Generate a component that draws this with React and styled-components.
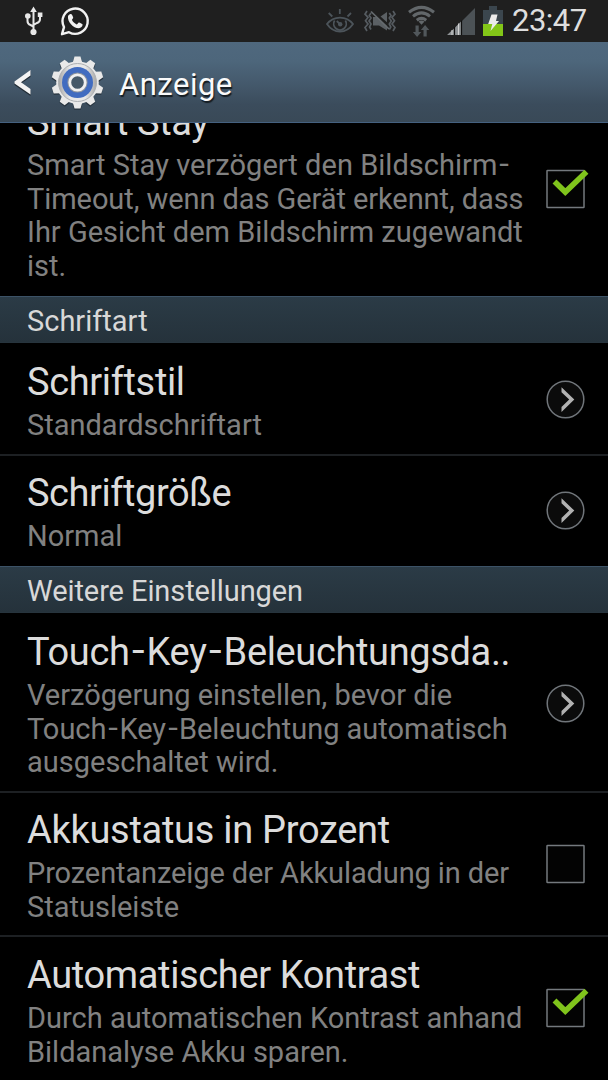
import React from "react";
import styled, { createGlobalStyle } from "styled-components";

const GlobalStyle = createGlobalStyle`
  * { box-sizing: border-box; }
  html, body { margin: 0; background: #000; overflow: hidden; }
`;

const Screen = styled.div`
  width: 608px;
  height: 1080px;
  display: flex;
  flex-direction: column;
  overflow: hidden;
  background: #000;
  color: #dcdcdc;
  font-family: Roboto, sans-serif;
  white-space: nowrap;
`;

const StatusBar = styled.header`
  flex: none;
  height: 42px;
  padding: 0 21px 0 22px;
  display: flex;
  justify-content: space-between;
  background: #1f1f1f;
`;

const StatusGroup = styled.div`
  display: flex;
  align-items: center;
`;

const Clock = styled.time`
  width: 75px;
  margin-left: 9px;
  font-size: 31px;
  line-height: 42px;
  letter-spacing: -0.5px;
  color: #dedede;
`;

const ActionBar = styled.div`
  flex: none;
  height: 81px;
  padding-left: 14px;
  display: flex;
  align-items: center;
  background: linear-gradient(#4f687e 0, #4d667b 24%, #455a6d 50%, #3b4c5c 78%, #394957 100%);
  border-bottom: 1px solid #456180;
`;

const BarTitle = styled.h1`
  margin: 5px 0 0 15px;
  font-size: 31px;
  font-weight: 400;
  line-height: 40px;
  letter-spacing: 0.5px;
  color: #fafafa;
  text-shadow: 1px 2px 1px #151c22;
`;

const List = styled.main`
  flex: 1;
  min-height: 0;
  display: flex;
  flex-direction: column;
  justify-content: flex-start;
  overflow: hidden;
`;

const SectionHeader = styled.h2`
  flex: none;
  height: 47px;
  margin: 0;
  padding: 1px 0 0 27px;
  border-top: 1px solid #3c5266;
  border-bottom: 1px solid #27343d;
  background: linear-gradient(#2b3b46, #25323b);
  color: #d8d8d8;
  font-size: 29px;
  font-weight: 400;
  line-height: 46px;
  letter-spacing: ${(p) => p.$tracking ?? 0}px;
`;

const Row = styled.section`
  flex: none;
  height: ${(p) => p.$height}px;
  margin-top: ${(p) => p.$scrolled ?? 0}px;
  padding: ${(p) => p.$inset ?? 16}px 22px 0 27px;
  display: flex;
  justify-content: space-between;
  border-bottom: ${(p) => (p.$divider ? "2px solid #1d2023" : "0")};
`;

const RowText = styled.div`
  min-width: 0;
`;

const RowTitle = styled.h3`
  margin: 0 0 4px;
  font-size: 38px;
  font-weight: 400;
  line-height: 45px;
  letter-spacing: ${(p) => p.$tracking ?? -0.36}px;
`;

const SummaryLine = styled.div`
  font-size: 29px;
  line-height: 33.7px;
  letter-spacing: ${(p) => p.$tracking ?? 0}px;
  color: #818181;
`;

const WideHyphen = styled.span`
  display: inline-block;
  margin: 0 0.08em 0 0.09em;
  letter-spacing: 0;
  transform: translateY(-0.04em) scaleX(1.2);
`;

const Control = styled.div`
  flex: none;
  height: 40px;
  margin-top: ${(p) => p.$top}px;
`;

const Graphic = styled.svg`
  display: block;
  flex: none;
  overflow: visible;
  margin-left: ${(p) => p.$gap ?? 0}px;
`;

function UsbIcon() {
  return (
    <Graphic width="22" height="30" viewBox="0 0 22 30" fill="none" stroke="#e8e8e8" strokeWidth="2">
      <path d="M11.5 5v19M5.5 10v5q0 3 3 4l3 1.5M18 9v4q0 3-3 4l-3.5 2" />
      <path d="M11.5 0.5l3.3 5.5H8.2z" fill="#e8e8e8" stroke="none" />
      <circle cx="5.8" cy="10" r="2.8" fill="#e8e8e8" stroke="none" />
      <path d="M15.8 6.5h4.6V11h-4.6z" fill="#e8e8e8" stroke="none" />
      <circle cx="11.5" cy="26" r="3.1" fill="#e8e8e8" stroke="none" />
    </Graphic>
  );
}

function WhatsAppIcon() {
  return (
    <Graphic $gap={15.5} width="29" height="30" viewBox="0 0 29 30">
      <path d="M2 28.2l2-7.1A12.6 12.6 0 1 1 9 26.2z" fill="none" stroke="#f2f2f2" strokeWidth="2.4" strokeLinejoin="round" />
      <path d="M8 10.2c.7-1.7 2.2-2.8 3.5-2 .8.6 1.4 2.6 1.7 3.4.2.8-1.4 1.8-1.2 2.5 1 2 2.5 3.4 4.7 4.3.8.2 1.5-2 2.3-1.8 1 .3 3.6 1.5 3.6 2 0 2-1.7 3.5-3.8 3.7-5.5 0-11.6-6.7-10.8-12.1z" fill="#f2f2f2" />
    </Graphic>
  );
}

function EyeIcon() {
  return (
    <Graphic width="28" height="24" viewBox="0 0 28 24" fill="none" stroke="#4c545a" strokeWidth="1.8">
      <path d="M1 15Q6 8.6 14 8.6T27 15Q22 22.5 14 22.5T1 15zM13.8 0v5M2.7 4l3.6 3.5M25 4l-3.5 3.5" />
      <path d="M8.6 11.5A6.3 6.3 0 1 0 19.4 11.5" />
      <circle cx="14.2" cy="15.2" r="2.2" fill="#4c545a" stroke="none" />
      <path d="M10.8 12l3.2 3.2" />
    </Graphic>
  );
}

function VibrateIcon() {
  return (
    <Graphic $gap={10.5} width="32" height="22" viewBox="0 0 32 22">
      <g fill="none" stroke="#555b60" strokeWidth="1.7">
        <path d="M3 1L1 4.2l3 3.2-2.5 3.4L4 14l-3 3.5L3 21M7 3L5.3 5.5 7 8l-2 3 2 3-1.5 3L7 19.5M29 1l2 3.2-3 3.2 2.5 3.4L28 14l3 3.5-2 3.5M25.3 3L27 5.5 25.3 8l2 3-2 3 1.5 3-1.5 2.5" />
      </g>
      <path d="M9 7h4.2L23 16v4.5L15 15.5H9zM16.5 6.4L23 2v10.3z" fill="#5b6064" />
      <path d="M7 1.5L25 19" stroke="#666b6f" strokeWidth="1.7" />
    </Graphic>
  );
}

function WifiIcon() {
  return (
    <Graphic $gap={11.5} width="27" height="31" viewBox="0 0 27 31">
      <g fill="none" stroke="#62676a" strokeWidth="3">
        <path d="M1 6.3Q13.5-3.5 26 6.3M5 10.3Q13.5 3.5 22 10.3M8.8 14.2Q13.5 10.6 18.2 14.2" />
      </g>
      <path d="M10.5 15.6Q13.5 13.2 16.5 15.6L13.5 18.8z" fill="#62676a" />
      <path d="M7.5 19.5h3.2V26h2.6L9.1 31l-4.2-5h2.6zM15.5 30.5h3.2V24h2.6l-4.2-5-4.2 5h2.6z" fill="#51575b" />
    </Graphic>
  );
}

function SignalIcon() {
  return (
    <Graphic $gap={12.5} width="28" height="27" viewBox="0 0 28 27">
      <path d="M15 13L28 0v27H15z" fill="#4c5256" />
      <path d="M0 27l7-6.5V27zM8 19.5l6-6V27H8z" fill="#8e9295" />
      <path d="M7.5 19v8M14.5 12.5V27" stroke="#101010" strokeWidth="1.2" />
      <path d="M5 22v5M11.5 15.5V27" stroke="#d2d2d2" />
    </Graphic>
  );
}

function BatteryIcon() {
  return (
    <Graphic $gap={8} width="20" height="30" viewBox="0 0 20 30">
      <path d="M6 0h8v4h6v14H0V4h6z" fill="#3b464e" />
      <path d="M0 18h20v12H0z" fill="#83c618" />
      <path d="M8.5 8.5h6L13 15h3L7.5 25l1.8-7H5.2z" fill="#ececec" />
    </Graphic>
  );
}

function BackIcon() {
  return (
    <Graphic width="17" height="26" viewBox="0 -1 17 26">
      <path d="M16.5 1v6L7 13.5l9.5 6.5v6L0.5 15v-2.5z" fill="#222d36" />
      <path d="M16.5 0v5.5L7 12.3l9.5 6.7v5.5L0.5 13.4v-2z" fill="#f4f4f4" />
    </Graphic>
  );
}

function GearIcon() {
  const teeth = Array.from({ length: 10 }, (_, i) => i * 36);
  return (
    <Graphic $gap={21} width="52" height="54" viewBox="-25.5 -27.5 52 54">
      <defs>
        <linearGradient id="metal" x1="0" y1="0" x2="1" y2="0">
          <stop offset="0" stopColor="#a8a8a8" />
          <stop offset=".3" stopColor="#e8e8e8" />
          <stop offset=".7" stopColor="#e8e8e8" />
          <stop offset="1" stopColor="#a8a8a8" />
        </linearGradient>
      </defs>
      <g fill="#26323d" transform="translate(0 1.2)">
        {teeth.map((a) => (
          <path key={a} d="M-4.9-20L-3.3-26H3.3L4.9-20z" transform={`rotate(${a})`} />
        ))}
      </g>
      <g fill="#e9e9e9">
        {teeth.map((a) => (
          <path key={a} d="M-5-19L-3-26H3L5-19z" transform={`rotate(${a})`} />
        ))}
      </g>
      <circle r="21.3" fill="#e9e9e9" />
      <circle r="19" fill="url(#metal)" stroke="#adb0b3" />
      <circle r="15.5" fill="#416cc0" />
      <circle r="8" fill="none" stroke="#8f959e" strokeWidth="4.2" />
      <circle r="7.7" fill="#465969" stroke="#f0f0f0" strokeWidth="2.8" />
    </Graphic>
  );
}

function Checkbox({ checked }) {
  return (
    <Graphic width="40" height="40" viewBox="0 0 40 40">
      <rect x="1" y="1.5" width="37" height="37" rx=".5" fill="#030303" stroke="#74797e" strokeWidth="1.5" />
      {checked && <path d="M8.5 12.5L19.3 23L40.5 2.7" fill="none" stroke="#80c41c" strokeWidth="5.6" />}
    </Graphic>
  );
}

function Disclosure() {
  return (
    <Graphic width="40" height="40" viewBox="0 0 40 40">
      <circle cx="19.5" cy="19.5" r="18.3" fill="#0b0b0b" stroke="#70757a" strokeWidth="1.5" />
      <path d="M15.5 7.2L28.3 19.6L15.5 32V27L23.2 19.6L15.5 12.2z" fill="#b2b2b2" />
    </Graphic>
  );
}

function Hyphenated({ text }) {
  return text.split("-").map((part, i) => (
    <React.Fragment key={i}>
      {i > 0 && <WideHyphen>-</WideHyphen>}
      {part}
    </React.Fragment>
  ));
}

function Setting({ title, tracking, lines, controlTop, control, ...row }) {
  return (
    <Row {...row}>
      <RowText>
        <RowTitle $tracking={tracking}>
          <Hyphenated text={title} />
        </RowTitle>
        {lines.map(([text, spacing]) => (
          <SummaryLine key={text} $tracking={spacing}>
            <Hyphenated text={text} />
          </SummaryLine>
        ))}
      </RowText>
      <Control $top={controlTop}>{control}</Control>
    </Row>
  );
}

export default function App() {
  return (
    <Screen>
      <GlobalStyle />
      <StatusBar>
        <StatusGroup>
          <UsbIcon />
          <WhatsAppIcon />
        </StatusGroup>
        <StatusGroup>
          <EyeIcon />
          <VibrateIcon />
          <WifiIcon />
          <SignalIcon />
          <BatteryIcon />
          <Clock>23:47</Clock>
        </StatusGroup>
      </StatusBar>
      <ActionBar>
        <BackIcon />
        <GearIcon />
        <BarTitle>Anzeige</BarTitle>
      </ActionBar>
      <List>
        <Setting
          $height={213}
          $scrolled={-40}
          $inset={17}
          title="Smart Stay"
          lines={[
            ["Smart Stay verzögert den Bildschirm-", 0.03],
            ["Timeout, wenn das Gerät erkennt, dass", -0.07],
            ["Ihr Gesicht dem Bildschirm zugewandt", 0],
            ["ist.", 0],
          ]}
          controlTop={69}
          control={<Checkbox checked />}
        />
        <SectionHeader>Schriftart</SectionHeader>
        <Setting
          $height={113}
          $divider
          $inset={17}
          title="Schriftstil"
          lines={[["Standardschriftart", 0]]}
          controlTop={20}
          control={<Disclosure />}
        />
        <Setting
          $height={110}
          $inset={15}
          title="Schriftgröße"
          tracking={-0.44}
          lines={[["Normal", 0]]}
          controlTop={20}
          control={<Disclosure />}
        />
        <SectionHeader $tracking={-0.09}>Weitere Einstellungen</SectionHeader>
        <Setting
          $height={180}
          $divider
          $inset={17}
          title="Touch-Key-Beleuchtungsda.."
          lines={[
            ["Verzögerung einstellen, bevor die", 0],
            ["Touch-Key-Beleuchtung automatisch", -0.03],
            ["ausgeschaltet wird.", 0],
          ]}
          controlTop={54}
          control={<Disclosure />}
        />
        <Setting
          $height={144}
          $divider
          $inset={15}
          title="Akkustatus in Prozent"
          tracking={-0.29}
          lines={[
            ["Prozentanzeige der Akkuladung in der", -0.11],
            ["Statusleiste", 0],
          ]}
          controlTop={36}
          control={<Checkbox />}
        />
        <Setting
          $height={145}
          $inset={16}
          title="Automatischer Kontrast"
          lines={[
            ["Durch automatischen Kontrast anhand", 0],
            ["Bildanalyse Akku sparen.", 0],
          ]}
          controlTop={35}
          control={<Checkbox checked />}
        />
      </List>
    </Screen>
  );
}
